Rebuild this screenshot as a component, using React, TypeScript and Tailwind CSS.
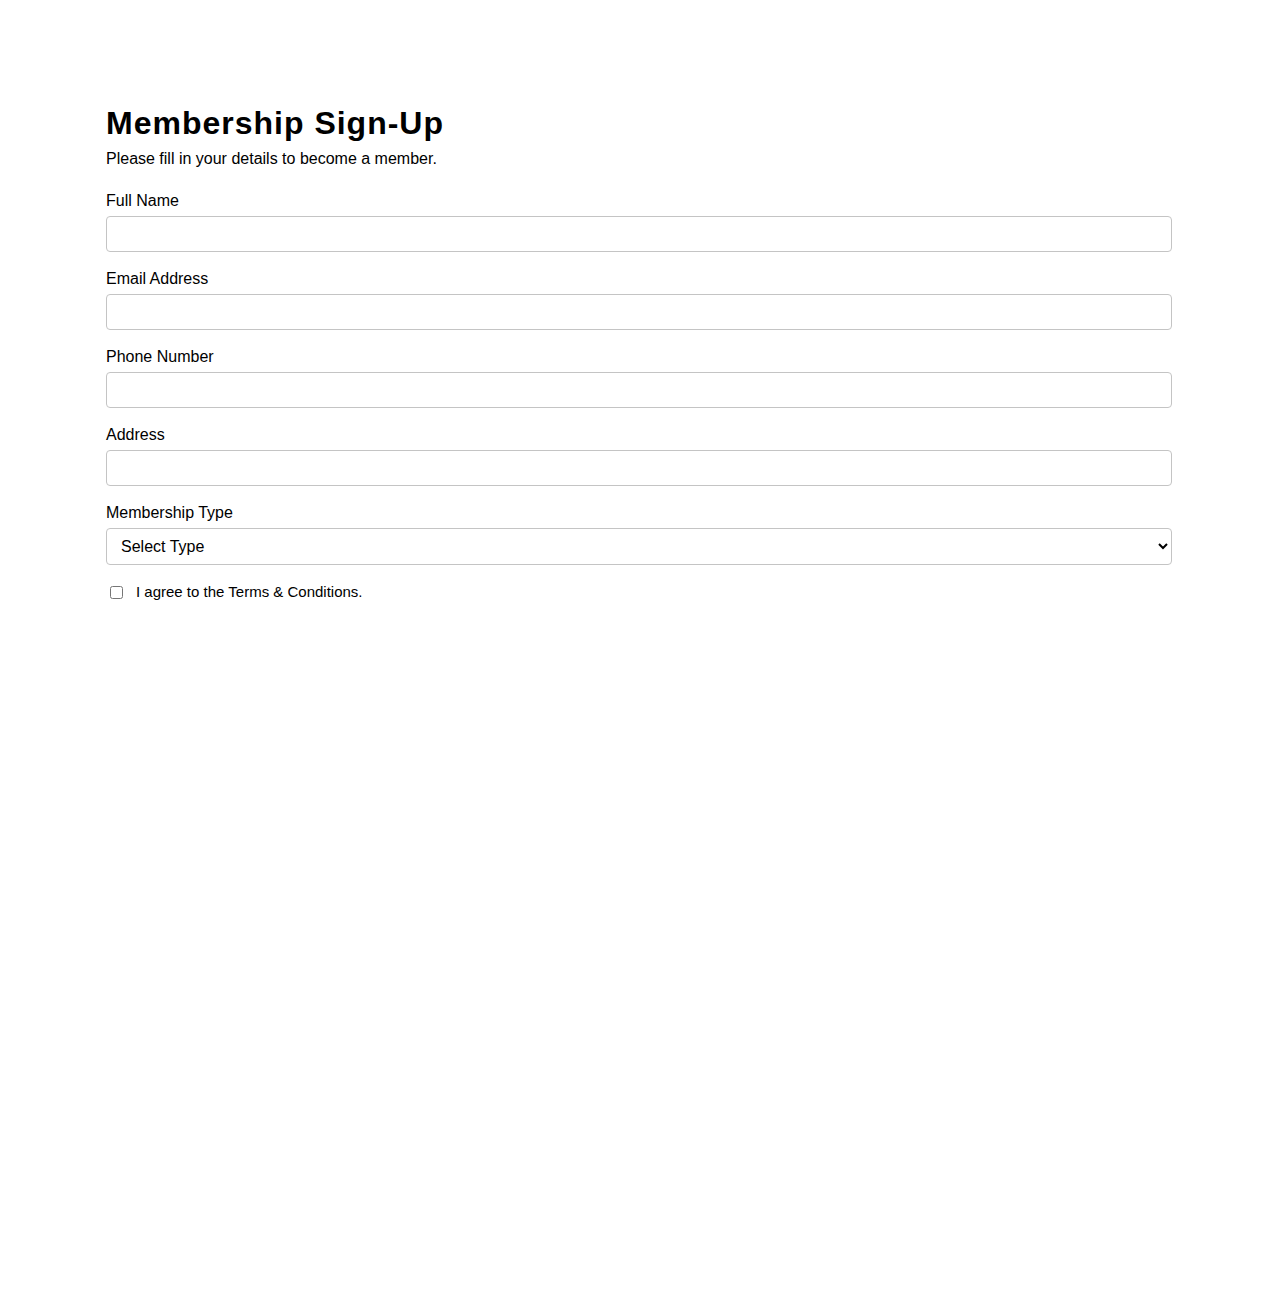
export default function App() {
  const fields = ["Full Name", "Email Address", "Phone Number", "Address"];
  return (
    <div className="min-h-[1300px] bg-white px-[106px] pt-[105px] text-black" style={{ fontFamily: '"Liberation Sans", Arial, sans-serif' }}>
      <h1 className="text-[32px] font-bold leading-[37px] tracking-[1px]">Membership Sign-Up</h1>
      <p className="mt-[8px] text-[16px] leading-[18px]">Please fill in your details to become a member.</p>
      <form className="mt-[24px]">
        {fields.map((f) => (
          <div key={f} className="mb-[18px]">
            <label className="block text-[16px] leading-[18px] mb-[6px]">{f}</label>
            <input type="text" className="block h-[36px] w-full rounded-[4px] border border-[#c4c4c4] px-[10px] text-[16px] outline-none" />
          </div>
        ))}
        <div className="mb-[18px]">
          <label className="block text-[16px] leading-[18px] mb-[6px]">Membership Type</label>
          <select className="block h-[37px] w-full rounded-[4px] border border-[#c4c4c4] bg-white px-[10px] text-[16px] outline-none" style={{ appearance: "auto" }}>
            <option>Select Type</option>
          </select>
        </div>
        <label className="flex items-center gap-[13px] pl-[4px] text-[15px] leading-[18px]">
          <input type="checkbox" className="h-[13px] w-[13px]" style={{ appearance: "auto" }} />
          <span>I agree to the Terms &amp; Conditions.</span>
        </label>
      </form>
    </div>
  );
}
